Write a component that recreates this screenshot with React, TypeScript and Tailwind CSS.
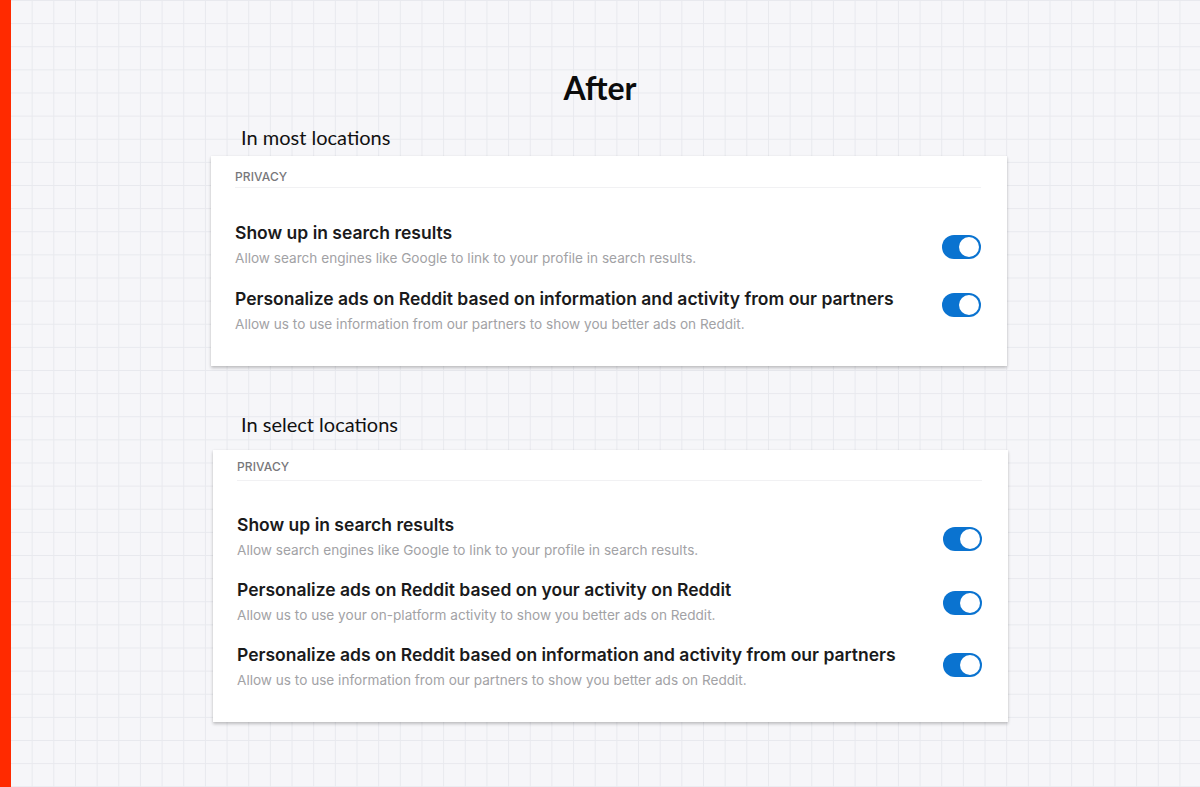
import React from "react";

type Row = { title: string; desc: string; toggleMt: string };

function Toggle({ mt }: { mt: string }) {
  return (
    <div className={`${mt} flex h-[24px] w-[39px] shrink-0 items-center justify-end rounded-full bg-[#0a73d0] px-[2px]`}>
      <div className="h-[20px] w-[20px] rounded-full bg-white" />
    </div>
  );
}

function Card({
  rows,
  className,
  headerClass,
  firstMt,
  gap,
  pb,
}: {
  rows: Row[];
  className: string;
  headerClass: string;
  firstMt: string;
  gap: string;
  pb: string;
}) {
  return (
    <div className={`bg-white shadow-[0_2px_3px_rgba(0,0,0,0.22),0_0_2px_rgba(0,0,0,0.06)] pl-[24px] pr-[26px] ${className} ${pb}`}>
      <div className={`border-b border-[#f1f1f3] ${headerClass}`}>
        <div className="text-[12px] leading-[16px] font-medium tracking-[0.1px] text-[#77777a]">PRIVACY</div>
      </div>
      <div className={`flex flex-col ${firstMt} ${gap}`}>
        {rows.map((r, i) => (
          <div key={i} className="flex items-start justify-between">
            <div className="flex flex-col">
              <div className="text-[17.5px] leading-[22px] font-semibold text-[#1a1a1b]">{r.title}</div>
              <div className="mt-[5px] text-[13.6px] leading-[18px] text-[#a2a2a5]">{r.desc}</div>
            </div>
            <Toggle mt={r.toggleMt} />
          </div>
        ))}
      </div>
    </div>
  );
}

export default function App() {
  const partners = "Personalize ads on Reddit based on information and activity from our partners";
  const partnersDesc = "Allow us to use information from our partners to show you better ads on Reddit.";
  const search = "Show up in search results";
  const searchDesc = "Allow search engines like Google to link to your profile in search results.";
  return (
    <div
      className="flex h-[787px] w-full overflow-hidden bg-[#f6f6f9] bg-[linear-gradient(to_right,#e8e9ee_1px,transparent_1px),linear-gradient(to_bottom,#e8e9ee_1px,transparent_1px)] bg-[size:21.67px_23.125px] bg-[position:10px_0px] font-['Inter',sans-serif]"
    >
      <div className="h-full w-[11px] shrink-0 bg-[#ff2a00]" />
      <div className="flex flex-1 flex-col pt-[69px]">
        <div className="pr-[11px] text-center font-['Lato',sans-serif] text-[32px] leading-[37px] font-bold text-[#0c0c0c]">
          After
        </div>

        <div className="ml-[230px] mt-[19px] font-['Lato',sans-serif] text-[20px] leading-[24px] text-[#111]">
          In most locations
        </div>
        <Card
          className="ml-[200px] mt-[7px] w-[796px] pt-[13px]"
          headerClass="pb-[2px]"
          firstMt="mt-[34px]"
          gap="gap-[21px]"
          pb="pb-[33px]"
          rows={[
            { title: search, desc: searchDesc, toggleMt: "mt-[13px]" },
            { title: partners, desc: partnersDesc, toggleMt: "mt-[5px]" },
          ]}
        />

        <div className="ml-[230px] mt-[46px] font-['Lato',sans-serif] text-[20px] leading-[24px] text-[#111]">
          In select locations
        </div>
        <Card
          className="ml-[202px] mt-[14px] w-[795px] pt-[9px]"
          headerClass="pb-[5px]"
          firstMt="mt-[33px]"
          gap="gap-[20px]"
          pb="pb-[33px]"
          rows={[
            { title: search, desc: searchDesc, toggleMt: "mt-[13px]" },
            {
              title: "Personalize ads on Reddit based on your activity on Reddit",
              desc: "Allow us to use your on-platform activity to show you better ads on Reddit.",
              toggleMt: "mt-[12px]",
            },
            { title: partners, desc: partnersDesc, toggleMt: "mt-[9px]" },
          ]}
        />
      </div>
    </div>
  );
}
